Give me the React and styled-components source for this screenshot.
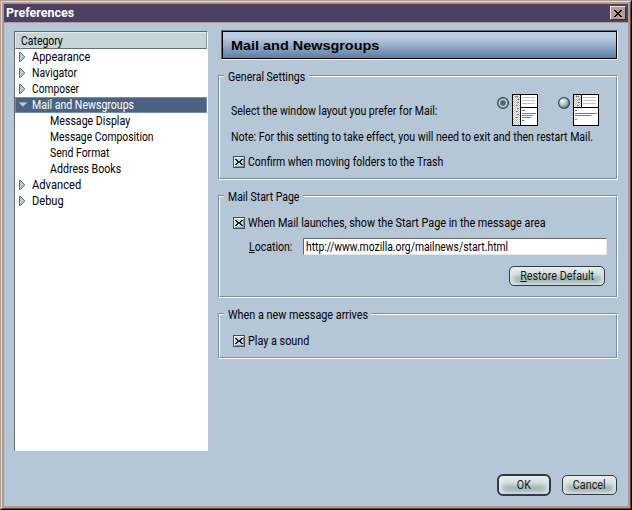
import React from 'react';
import styled, { createGlobalStyle, css } from 'styled-components';

const Global = createGlobalStyle`
  * { box-sizing: border-box; }
  body { margin: 0; overflow: hidden; background: #b5c6d6; }
`;

const Window = styled.div`
  width: 632px;
  height: 510px;
  border: 1px solid #b09c93;
  border-right-color: #000;
  border-bottom-color: #000;
  font: 12px/16px Roboto, sans-serif;
  color: #000;
`;
const Bevel = styled.div`
  height: 508px;
  border: 1px solid #e9ddd6;
  border-right-color: #5c4843;
  border-bottom-color: #5c4843;
`;
const Frame = styled.div`
  height: 506px;
  border: 2px solid #b09a90;
  background: #b5c6d6;
`;
const TitleBar = styled.div`
  display: flex;
  justify-content: space-between;
  height: 19px;
  padding: 2px 2px 0 2px;
  background: #4a4163;
  border-bottom: 1px solid #b09a94;
  color: #fff;
  font-weight: bold;
  line-height: 14px;
`;
const CloseButton = styled.button`
  width: 16px;
  height: 14px;
  padding: 0;
  display: flex;
  align-items: center;
  justify-content: center;
  background: #b59f94;
  border: 1px solid #efe4dc;
  border-right-color: #3c2c2a;
  border-bottom-color: #3c2c2a;
`;

/* Narrow lettering: $k is the horizontal condensing factor. */
const Text = styled.span`
  display: block;
  white-space: nowrap;
  transform: scaleX(${(p) => p.$k});
  transform-origin: ${(p) => (p.$center ? '50%' : '0')} 50%;
`;

const Body = styled.div`
  display: flex;
  height: 428px;
  padding: 7px 10px 0;
`;
const Tree = styled.div`
  width: 194px;
  height: 420px;
  margin-top: 1px;
  background: #fff;
  border-top: 1px solid #63696b;
  border-left: 1px solid #63696b;
  border-right: 1px solid #fff;
`;
const TreeHeader = styled.div`
  height: 17px;
  padding-left: 5px;
  padding-top: 1px;
  line-height: 15px;
  background: #c6d6d6;
  border: 1px solid #e4eded;
  border-right-color: #8b9c9c;
  border-bottom-color: #63706f;
`;
const TreeRow = styled.div`
  display: flex;
  align-items: center;
  height: 16px;
  padding-left: ${(p) => (p.$child ? 35 : 3)}px;
  gap: 4px;
  line-height: 14px;
  ${(p) =>
    p.$selected &&
    css`
      background: #4a6384;
      border: 1px solid #7290ab;
      padding-left: 2px;
      color: #fff;
    `}
`;

const Panel = styled.div`
  width: 400px;
  margin-left: 10px;
`;
const Heading = styled.h1`
  height: 30px;
  width: 397px;
  margin: 0 0 0 3px;
  border: 1px solid #63696b;
  border-right-color: #f4f7fa;
  border-bottom-color: #f4f7fa;
`;
const HeadingFill = styled.div`
  height: 28px;
  border: 1px solid #000;
  padding-left: 8px;
  font: bold 13px/27px "Liberation Sans", sans-serif;
  background: linear-gradient(#bdcde2 0%, #b9c9df 24%, #5c7ca4 100%);
`;

const Group = styled.fieldset`
  position: relative;
  width: 400px;
  height: ${(p) => p.$h}px;
  margin: ${(p) => p.$top}px 0 0;
  padding: 0;
  min-width: 0;
  border: 1px solid #7b8c9c;
  border-right-color: #fff;
  border-bottom-color: #fff;
`;
const GroupInner = styled.div`
  height: 100%;
  border: 1px solid #fff;
  border-right-color: #7b8c9c;
  border-bottom-color: #7b8c9c;
`;
const GroupTitle = styled.div`
  position: absolute;
  top: -7px;
  left: 5px;
  width: ${(p) => p.$w}px;
  height: 16px;
  padding-left: 4px;
  background: #b5c6d6;
  line-height: 16px;
`;
const LayoutRow = styled.div`
  display: flex;
  padding: 17px 0 0 11px;
  height: 50px;
`;
const LayoutLabel = styled.div`
  width: 266px;
  flex: none;
  padding-top: 9px;
`;
const Choices = styled.div`
  display: flex;
  gap: 20px;
`;
const Choice = styled.div`
  display: flex;
  gap: 3px;
  svg { flex: none; }
`;
const RadioSlot = styled.div`
  padding-top: 3px;
  height: 18px;
  line-height: 0;
`;
const Note = styled.div`
  padding: 2px 0 0 11px;
`;
const CheckRow = styled.label`
  display: flex;
  gap: 3px;
  height: 16px;
  margin: ${(p) => p.$top}px 0 0 13px;
  line-height: 16px;
  svg { margin-top: 2px; flex: none; }
`;
const LocationRow = styled.div`
  display: flex;
  margin: 7px 0 0 29px;
  line-height: 18px;
`;
const LocationLabel = styled.div`
  width: 54px;
`;
const Field = styled.div`
  width: 304px;
  height: 17px;
  padding-left: 2px;
  line-height: 16px;
  background: #fff;
  border: 1px solid #63696b;
  border-right-color: #e7e7ef;
  border-bottom-color: #e7e7ef;
`;
const Button = styled.button`
  width: ${(p) => p.$w}px;
  height: ${(p) => (p.$primary ? 22 : 20)}px;
  padding: 0;
  display: flex;
  align-items: center;
  justify-content: center;
  border: ${(p) => (p.$primary ? 2 : 1)}px solid #31394f;
  border-radius: ${(p) => (p.$primary ? 6 : 5)}px;
  background: linear-gradient(#eef1f0, #d3dedd 38%, #a5bab7 62%, #a9bdba 78%, #c9d5d3);
  box-shadow: inset 5px 0 5px -2px #e6ecec, inset -5px 0 5px -2px #dde5e4;
  font: 12px/16px Roboto, sans-serif;
  color: #181818;
`;
const RestoreRow = styled.div`
  display: flex;
  justify-content: flex-end;
  padding: 10px 11px 0 0;
`;
const Footer = styled.div`
  display: flex;
  align-items: center;
  justify-content: flex-end;
  height: 22px;
  margin-top: 23px;
  padding-right: 11px;
  gap: 11px;
`;

function Twisty({ open }) {
  return (
    <svg width="10" height="12" viewBox="0 0 10 12">
      {open ? (
        <path d="M.8 3.5H9L5 7.6Z" fill="#c3d5d3" stroke="#8ca5a8" strokeWidth=".8" />
      ) : (
        <path d="M1.5 1.5V10.5H2.5L6.5 6.3V5.7L2.5 1.5Z" fill="#b3cdd0" stroke="#4e6d70" />
      )}
    </svg>
  );
}

function Check() {
  return (
    <svg width="12" height="12" viewBox="0 0 12 12" shapeRendering="crispEdges">
      <rect width="12" height="12" fill="#3d4d61" />
      <rect x="1" y="1" width="10" height="10" fill="#f1f5f4" />
      <path d="M10 2h1v9H2v-1h8z" fill="#7f9896" />
      <rect x="2" y="2" width="8" height="8" fill="#cbd9d8" />
      <path
        d="M2 3h2v1h1v1h2V4h1V3h2v1H9v1H8v2h1v1h1v1H8V8H7V7H5v1H4v1H2V8h1V7h1V5H3V4H2z"
        fill="#14232e"
      />
    </svg>
  );
}

function Radio({ on }) {
  return (
    <svg width="12" height="12" viewBox="0 0 12 12">
      <defs>
        <radialGradient id="orb" cx=".35" cy=".3" r=".75">
          <stop offset="0" stopColor="#fff" />
          <stop offset=".45" stopColor="#bccbcb" />
          <stop offset="1" stopColor="#5d7477" />
        </radialGradient>
      </defs>
      <circle cx="6" cy="6" r="5.4" fill={on ? '#8fa5a5' : 'url(#orb)'} stroke="#344357" strokeWidth="1.2" />
      {on && <circle cx="6" cy="6" r="3.5" fill="#47706a" stroke="#d5e1de" strokeWidth="1.1" />}
    </svg>
  );
}

function LayoutIcon({ wide, id }) {
  return (
    <svg width="26" height="32" viewBox="0 0 26 32" shapeRendering="crispEdges">
      <defs>
        <pattern id={id} width="2" height="2" patternUnits="userSpaceOnUse">
          <path d="M0 0h1v1H0zM1 1h1v1H1z" fill="#bdbdbd" />
        </pattern>
      </defs>
      <rect width="26" height="32" fill="#000" />
      <rect x="1" y="1" width="24" height="30" fill="#fff" />
      <rect x="1" y="1" width="7" height={wide ? 12 : 30} fill={`url(#${id})`} />
      <path
        d={'M3 2h3v1H3zM5 5h2v1H5zM5 8h2v1H5zM4 11h2v1H4z' + (wide ? '' : 'M5 14h2v1H5zM4 17h2v1H4zM5 20h2v1H5zM4 23h2v1H4z')}
        fill="#848484"
      />
      <path d={wide ? 'M8 1h1v12H8zM1 13h24v1H1z' : 'M8 1h1v30H8zM9 13h16v1H9z'} fill="#000" />
      <path d="M10 3h13v1H10zM10 6h13v1H10zM10 9h13v1H10z" fill="#c0c0c0" />
      <path
        d={
          wide
            ? 'M2 16h2v1H2zM2 19h22v1H2zM2 21h16v1H2zM2 25h2v1H2z'
            : 'M10 16h3v1h-3zM10 19h14v1H10zM10 21h11v1H10zM10 23h9v1h-9zM10 26h2v1h-2z'
        }
        fill="#7b7b7b"
      />
    </svg>
  );
}

const ROWS = [
  { t: 'Appearance', k: 0.914 },
  { t: 'Navigator', k: 0.871 },
  { t: 'Composer', k: 0.85 },
  { t: 'Mail and Newsgroups', k: 0.88, open: true },
  { t: 'Message Display', k: 0.885, child: true },
  { t: 'Message Composition', k: 0.863, child: true },
  { t: 'Send Format', k: 0.87, child: true },
  { t: 'Address Books', k: 0.884, child: true },
  { t: 'Advanced', k: 0.93 },
  { t: 'Debug', k: 0.923 },
];

export default function App() {
  return (
    <Window>
      <Global />
      <Bevel>
        <Frame>
          <TitleBar>
            <Text $k={1.04}>Preferences</Text>
            <CloseButton aria-label="Close">
              <svg width="8" height="7" viewBox="0 0 8 7" shapeRendering="crispEdges">
                <path d="M0 0h2v1h1v1h2V1h1V0h2v1H7v1H6v1H5v1h1v1h1v1h1v1H6V6H5V5H3v1H2v1H0V6h1V5h1V4h1V3H2V2H1V1H0z" fill="#000" />
              </svg>
            </CloseButton>
          </TitleBar>
          <Body>
            <Tree>
              <TreeHeader>
                <Text $k={0.87}>Category</Text>
              </TreeHeader>
              {ROWS.map((r) => (
                <TreeRow key={r.t} $child={r.child} $selected={r.open}>
                  {!r.child && <Twisty open={r.open} />}
                  <Text $k={r.k}>{r.t}</Text>
                </TreeRow>
              ))}
            </Tree>
            <Panel>
              <Heading>
                <HeadingFill>
                  <Text $k={1.11}>Mail and Newsgroups</Text>
                </HeadingFill>
              </Heading>
              <Group $h={105} $top={15}>
                <GroupTitle $w={85}>
                  <Text $k={0.881}>General Settings</Text>
                </GroupTitle>
                <GroupInner>
                  <LayoutRow>
                    <LayoutLabel>
                      <Text $k={0.876}>Select the window layout you prefer for Mail:</Text>
                    </LayoutLabel>
                    <Choices>
                      <Choice>
                        <RadioSlot><Radio on /></RadioSlot>
                        <LayoutIcon id="dots-a" />
                      </Choice>
                      <Choice>
                        <RadioSlot><Radio /></RadioSlot>
                        <LayoutIcon id="dots-b" wide />
                      </Choice>
                    </Choices>
                  </LayoutRow>
                  <Note>
                    <Text $k={0.88}>
                      Note: For this setting to take effect, you will need to exit and then restart Mail.
                    </Text>
                  </Note>
                  <CheckRow $top={9}>
                    <Check />
                    <Text $k={0.876}>Confirm when moving folders to the Trash</Text>
                  </CheckRow>
                </GroupInner>
              </Group>
              <Group $h={103} $top={15}>
                <GroupTitle $w={79}>
                  <Text $k={0.872}>Mail Start Page</Text>
                </GroupTitle>
                <GroupInner>
                  <CheckRow $top={18}>
                    <Check />
                    <Text $k={0.9}>When Mail launches, show the Start Page in the message area</Text>
                  </CheckRow>
                  <LocationRow>
                    <LocationLabel>
                      <Text $k={0.88}><u>L</u>ocation:</Text>
                    </LocationLabel>
                    <Field>
                      <Text $k={0.862}>http://www.mozilla.org/mailnews/start.html</Text>
                    </Field>
                  </LocationRow>
                  <RestoreRow>
                    <Button $w={96}>
                      <Text $k={0.898} $center><u>R</u>estore Default</Text>
                    </Button>
                  </RestoreRow>
                </GroupInner>
              </Group>
              <Group $h={46} $top={15}>
                <GroupTitle $w={147}>
                  <Text $k={0.901}>When a new message arrives</Text>
                </GroupTitle>
                <GroupInner>
                  <CheckRow $top={18}>
                    <Check />
                    <Text $k={0.9}>Play a sound</Text>
                  </CheckRow>
                </GroupInner>
              </Group>
            </Panel>
          </Body>
          <Footer>
            <Button $w={54} $primary>
              <Text $k={0.892} $center>OK</Text>
            </Button>
            <Button $w={55}>
              <Text $k={0.899} $center>Cancel</Text>
            </Button>
          </Footer>
        </Frame>
      </Bevel>
    </Window>
  );
}
